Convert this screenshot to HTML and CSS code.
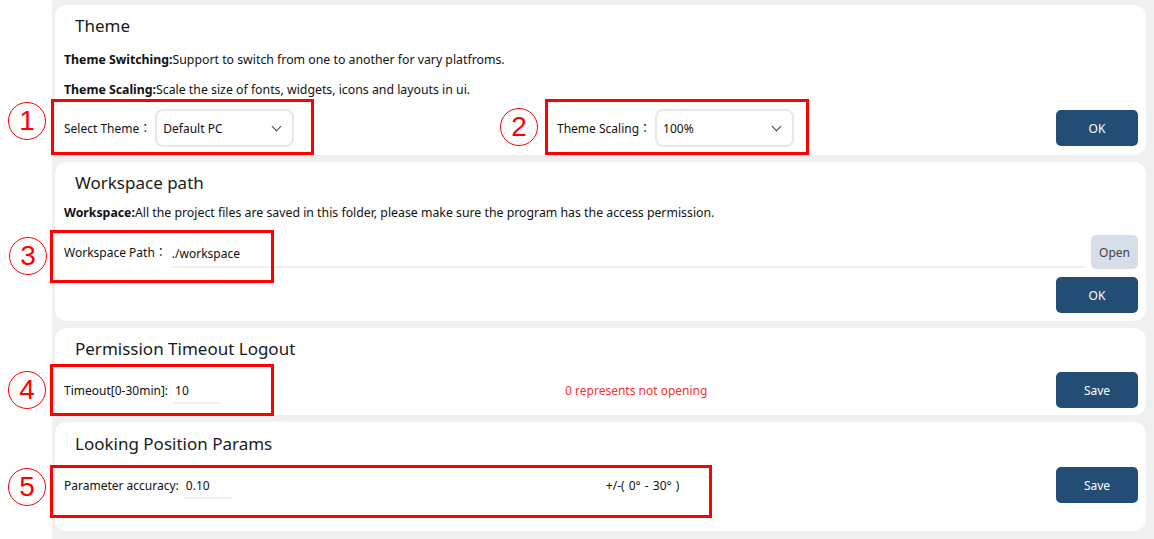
FILE: index.html
```html
<!DOCTYPE html>
<html lang="en">
<head>
    <meta charset="UTF-8">
    <title>Settings</title>
    <link rel="stylesheet" href="styles.css">
</head>
<body>

<div class="page">
    <div class="sidebar"></div>

    <div class="content">
        <div class="card card-theme">
            <h2 class="card-title">Theme</h2>
            <p class="desc"><b>Theme Switching:</b>Support to switch from one to another for vary platfroms.</p>
            <p class="desc"><b>Theme Scaling:</b>Scale the size of fonts, widgets, icons and layouts in ui.</p>
            <div class="row">
                <div class="field">
                    <span class="label">Select Theme：</span>
                    <div class="select">Default PC<span class="chevron"></span></div>
                </div>
                <div class="field">
                    <span class="label">Theme Scaling：</span>
                    <div class="select">100%<span class="chevron"></span></div>
                </div>
                <button class="btn">OK</button>
            </div>
        </div>

        <div class="card card-workspace">
            <h2 class="card-title">Workspace path</h2>
            <p class="desc"><b>Workspace:</b>All the project files are saved in this folder, please make sure the program has the access permission.</p>
            <div class="path-row">
                <span class="label">Workspace Path：</span>
                <input class="path-input" type="text" value="./workspace">
                <button class="btn-open">Open</button>
            </div>
            <div class="actions">
                <button class="btn">OK</button>
            </div>
        </div>

        <div class="card card-timeout">
            <h2 class="card-title">Permission Timeout Logout</h2>
            <div class="row">
                <span class="label">Timeout[0-30min]:</span>
                <input class="short-input" type="text" value="10">
                <span class="hint">0 represents not opening</span>
                <button class="btn">Save</button>
            </div>
        </div>

        <div class="card card-looking">
            <h2 class="card-title">Looking Position Params</h2>
            <div class="row">
                <span class="label">Parameter accuracy:</span>
                <input class="short-input" type="text" value="0.10">
                <span class="range">+/-( 0° - 30° )</span>
                <button class="btn">Save</button>
            </div>
        </div>
    </div>
</div>

<!-- red markers drawn over the screenshot -->
<div class="marker box1"></div>
<div class="marker box2"></div>
<div class="marker box3"></div>
<div class="marker box4"></div>
<div class="marker box5"></div>
<div class="num n1">1</div>
<div class="num n2">2</div>
<div class="num n3">3</div>
<div class="num n4">4</div>
<div class="num n5">5</div>

</body>
</html>
```

FILE: styles.css
```css
body {
    margin: 0;
    font-family: "Noto Sans", "Noto Sans CJK JP", sans-serif;
    font-size: 12px;
    color: #111;
    position: relative;
}
.page {
    display: flex;
    height: 539px;
}
.sidebar {
    width: 52px;
    background-color: #fff;
}
.content {
    flex: 1;
    background-color: #f0f0f0;
    padding: 5px 8px 9px 3px;
    display: flex;
    flex-direction: column;
    gap: 7px;
}
.card {
    background-color: #fff;
    border-radius: 12px;
    padding: 10px 8px 8px 9px;
}
.card-title {
    margin: 0 0 8px 11px;
    font-size: 17px;
    font-weight: normal;
    line-height: 22px;
    color: #1a1a1a;
}
.desc {
    margin: 0;
    line-height: 30px;
    font-size: 12.3px;
}
.row {
    display: flex;
    align-items: center;
    height: 38px;
}
.card-theme .row {
    margin-top: 4px;
}
.field {
    display: flex;
    align-items: center;
    width: 493px;
}
.label {
    white-space: nowrap;
}
.select {
    width: 139px;
    height: 38px;
    box-sizing: border-box;
    border: 2px solid #e8e8e8;
    border-radius: 8px;
    margin-left: 4px;
    padding: 0 12px 0 6px;
    display: flex;
    align-items: center;
    justify-content: space-between;
}
.chevron {
    width: 6px;
    height: 6px;
    border-right: 1.5px solid #444;
    border-bottom: 1.5px solid #444;
    transform: rotate(45deg);
    margin-top: -4px;
}
.btn {
    margin-left: auto;
    width: 82px;
    height: 36px;
    border: none;
    border-radius: 5px;
    background-color: #234d74;
    color: #fff;
    font-family: inherit;
    font-size: 12px;
}
.card-workspace .card-title {
    margin-bottom: 4px;
}
.path-row {
    display: flex;
    align-items: center;
    margin-top: 7px;
    height: 34px;
}
.path-input {
    flex: 1;
    align-self: flex-start;
    box-sizing: border-box;
    height: 32px;
    margin: 1px 0 0 5px;
    padding: 5px 0 0 0;
    border: none;
    border-bottom: 2px solid #efefef;
    font-family: inherit;
    font-size: 12px;
    color: #111;
    outline: none;
}
.btn-open {
    width: 47px;
    height: 34px;
    margin-left: 6px;
    border: none;
    border-radius: 5px;
    background-color: #d6dee8;
    color: #444;
    font-family: inherit;
    font-size: 12px;
}
.actions {
    display: flex;
    justify-content: flex-end;
    margin-top: 8px;
}
.card-timeout {
    padding-bottom: 6px;
}
.card-timeout .card-title {
    margin-bottom: 11px;
}
.card-looking {
    padding-top: 11px;
    padding-bottom: 27px;
}
.card-looking .card-title {
    margin-bottom: 11px;
}
.short-input {
    width: 47px;
    box-sizing: border-box;
    height: 28px;
    margin-left: 5px;
    padding: 2px 0 0 2px;
    border: none;
    border-bottom: 2px solid #efefef;
    font-family: inherit;
    font-size: 12px;
    color: #111;
    outline: none;
}
.hint {
    margin-left: 345px;
    color: #ff3030;
}
.range {
    margin-left: 375px;
    word-spacing: 1px;
}

/* annotation markers */
.marker {
    position: absolute;
    border: 3px solid #f00;
    box-sizing: border-box;
}
.box1 { left: 51px; top: 99px; width: 263px; height: 56px; }
.box2 { left: 545px; top: 99px; width: 264px; height: 56px; }
.box3 { left: 50px; top: 230px; width: 224px; height: 53px; }
.box4 { left: 50px; top: 364px; width: 224px; height: 52px; }
.box5 { left: 50px; top: 465px; width: 662px; height: 53px; }
.num {
    position: absolute;
    width: 38px;
    height: 38px;
    box-sizing: border-box;
    border: 1.5px solid #f00;
    border-radius: 50%;
    color: #f00;
    font-family: "Liberation Sans", sans-serif;
    font-size: 28px;
    line-height: 35px;
    text-align: center;
}
.n1 { left: 8px; top: 102px; }
.n2 { left: 500px; top: 108px; }
.n3 { left: 9px; top: 237px; }
.n4 { left: 8px; top: 371px; }
.n5 { left: 8px; top: 468px; }
```
